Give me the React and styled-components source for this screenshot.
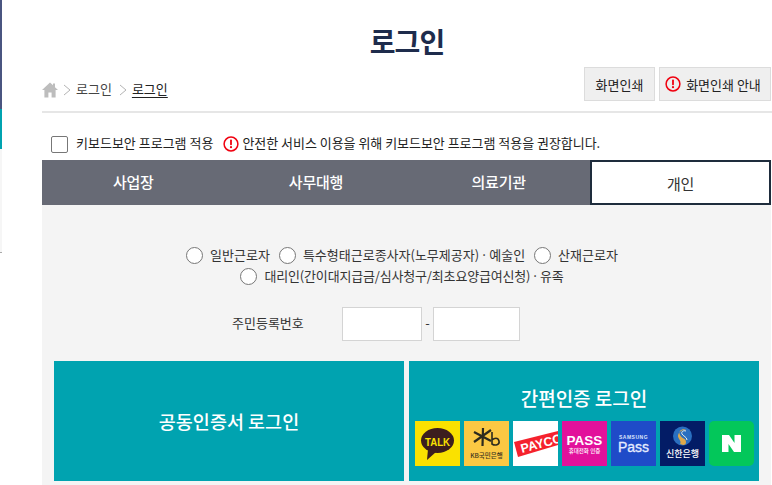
import { createGlobalStyle, styled } from "styled-components";

const GlobalStyle = createGlobalStyle`
  html, body {
    margin: 0;
    padding: 0;
    background: #fff;
  }
  body {
    font-family: "Noto Sans CJK KR", "Noto Sans", sans-serif;
    color: #222;
    overflow: hidden;
  }
`;

const Page = styled.div`
  display: flex;
  width: 772px;
  height: 485px;
  overflow: hidden;
`;
const Rail = styled.div`
  flex: 0 0 42px;
  display: flex;
  flex-direction: column;
`;
const RailBar = styled.div`
  width: 2px;
  height: ${(p) => p.$h}px;
  background: ${(p) => p.$color};
`;
const RailLine = styled.div`
  width: 2px;
  height: 1px;
  background: #aaa;
`;
const Main = styled.main`
  flex: 1;
  min-width: 0;
  display: flex;
  flex-direction: column;
  & > * {
    flex-shrink: 0;
  }
`;
const Title = styled.h1`
  margin: 0;
  padding-top: 22px;
  height: 66px;
  box-sizing: border-box;
  font-size: 28px;
  line-height: 38px;
  font-weight: 700;
  letter-spacing: -0.9px;
  text-align: center;
  color: #1e2c4c;
`;
const TopRow = styled.div`
  display: flex;
  justify-content: space-between;
  align-items: flex-start;
  height: 45px;
  padding-right: 1px;
  border-bottom: 2px solid #e6e6e6;
`;
const Crumbs = styled.nav`
  display: flex;
  align-items: center;
  height: 34px;
  padding-top: 13px;
  box-sizing: border-box;
  font-size: 13px;
  color: #444;
`;
const CrumbLink = styled.span`
  margin-right: ${(p) => (p.$current ? "0" : "2px")};
  padding-bottom: 2px;
  color: ${(p) => (p.$current ? "#222" : "#444")};
  text-decoration: ${(p) => (p.$current ? "underline" : "none")};
  text-underline-offset: 3px;
`;
const CrumbSep = styled.span`
  display: flex;
  margin: 0 5px;
`;
const Buttons = styled.div`
  display: flex;
  gap: 4px;
  padding-top: 1px;
`;
const PrintButton = styled.button`
  display: flex;
  align-items: center;
  justify-content: center;
  gap: 5px;
  width: ${(p) => p.$w}px;
  height: 34px;
  padding: 0 ${(p) => (p.$icon ? "4px" : "0")} 0 0;
  background: #efefef;
  border: 1px solid #dcdcdc;
  font: inherit;
  font-size: 13px;
  color: #222;
`;
const SecurityRow = styled.div`
  display: flex;
  align-items: center;
  height: 47px;
  padding: 15px 0 0 9px;
  box-sizing: border-box;
  font-size: 13px;
  color: #222;
`;
const Check = styled.span`
  width: 15px;
  height: 15px;
  border: 1px solid #777;
  border-radius: 2px;
  background: #fff;
  margin-right: 8px;
`;
const SecurityText = styled.span`
  padding-bottom: 3px;
  letter-spacing: ${(p) => (p.$note ? "-0.03px" : "0")};
`;
const SecurityNote = styled.span`
  display: flex;
  align-items: center;
  gap: 3px;
  margin-left: 10px;
`;
const Tabs = styled.div`
  display: grid;
  grid-template-columns: repeat(3, 1fr) 181px;
  height: 45px;
  margin-right: 1px;
  background: #676a75;
`;
const Tab = styled.div`
  display: flex;
  align-items: center;
  justify-content: center;
  font-size: 15px;
  font-weight: ${(p) => (p.$active ? 400 : 500)};
  letter-spacing: -0.2px;
  color: ${(p) => (p.$active ? "#333" : "#fff")};
  background: ${(p) => (p.$active ? "#fff" : "transparent")};
  border: ${(p) => (p.$active ? "2px solid #1e2c3c" : "none")};
  box-sizing: border-box;
  padding-top: ${(p) => (p.$active ? "2px" : "0")};
  padding-bottom: ${(p) => (p.$active ? "0" : "2px")};
`;
const Panel = styled.section`
  flex: 1;
  margin-right: 1px;
  padding: 40px 12px 4px;
  background: #f4f4f4;
  display: flex;
  flex-direction: column;
`;
const Radios = styled.div`
  display: flex;
  flex-wrap: wrap;
  justify-content: center;
  column-gap: 9px;
  padding-right: 9px;
  font-size: 13px;
  line-height: 21px;
  word-spacing: -1.5px;
  color: #333;
`;
const RadioItem = styled.label`
  display: flex;
  align-items: center;
  gap: 7px;
  letter-spacing: ${(p) => (p.$tight ? "-0.17px" : "0")};
`;
const RadioDot = styled.span`
  width: 15px;
  height: 15px;
  border: 1px solid #777;
  border-radius: 50%;
  background: #fff;
`;
const RadioText = styled.span`
  line-height: 19px;
  padding-bottom: 2px;
`;
const IdRow = styled.div`
  display: flex;
  align-items: center;
  height: 34px;
  margin: 20px 0;
  padding-left: 178px;
  font-size: 13px;
  color: #333;
`;
const IdLabel = styled.label`
  width: 110px;
  padding-bottom: 4px;
`;
const IdInput = styled.input`
  width: ${(p) => p.$w}px;
  height: 34px;
  box-sizing: border-box;
  padding: 0;
  border: 1px solid #d4d4d4;
  background: #fff;
`;
const Dash = styled.span`
  width: 11px;
  padding-bottom: 4px;
  text-align: center;
`;
const LoginRow = styled.div`
  display: flex;
  gap: 5px;
  height: 120px;
`;
const LoginCard = styled.div`
  flex: 0 0 350px;
  display: flex;
  flex-direction: column;
  align-items: center;
  justify-content: center;
  background: #00a3b0;
  color: #fff;
  font-size: 18.5px;
  font-weight: 500;
`;
const SimpleCard = styled(LoginCard)`
  justify-content: flex-start;
  padding-top: 24px;
`;
const SimpleTitle = styled.div`
  margin-bottom: 10px;
  font-size: 19px;
  line-height: 26px;
`;
const LogoRow = styled.div`
  display: flex;
  gap: 4px;
`;
const LogoBox = styled.div`
  width: 45px;
  height: 45px;
  overflow: hidden;
  background: ${(p) => p.$bg};
  border-radius: ${(p) => (p.$round ? "5px" : "0")};
`;
const LogoSvg = styled.svg`
  display: block;
  width: 45px;
  height: 45px;
  font-family: "Liberation Sans", "Noto Sans CJK KR", sans-serif;
`;
const KrText = styled.text`
  font-family: "Noto Sans CJK KR", sans-serif;
`;

const Alert = () => (
  <svg width="16" height="16" viewBox="0 0 16 16" style={{ flex: "none" }}>
    <circle cx="8" cy="8" r="6.9" fill="none" stroke="#f0000f" strokeWidth="1.5" />
    <rect x="7.1" y="3.6" width="1.8" height="5.6" rx="0.7" fill="#f0000f" />
    <circle cx="8" cy="11.2" r="1.1" fill="#f0000f" />
  </svg>
);

const Chevron = () => (
  <svg width="8" height="12" viewBox="0 0 8 12">
    <path d="M1 1l6 5-6 5" fill="none" stroke="#b4b4b4" strokeWidth="1" />
  </svg>
);

const Home = () => (
  <svg width="16" height="16" viewBox="0 0 16 16">
    <path d="M8 0.5L0 8h2.4v7.5h4V10.5h3.2v5h4V8H16L13 5.2V1.5h-2v1.8z" fill="#bdbdbd" />
  </svg>
);

const TalkLogo = () => (
  <LogoSvg viewBox="0 0 45 45">
    <ellipse cx="22.5" cy="19.5" rx="16.5" ry="12.5" fill="#3c1e1e" />
    <path d="M13 28l-1 11 9-8z" fill="#3c1e1e" />
    <text x="22.5" y="25" textAnchor="middle" fontSize="11" fontWeight="700" fill="#fae100" textLength="25" lengthAdjust="spacingAndGlyphs">TALK</text>
  </LogoSvg>
);

const KbLogo = () => (
  <LogoSvg viewBox="0 0 45 45">
    <path d="M19 7l-0.5 18M10 11l17 9M27 9L10 21" stroke="#2c2a1e" strokeWidth="2.2" fill="none" />
    <path d="M28 11v12c3 2 8 1 7-3s-5-3-7-1" stroke="#2c2a1e" strokeWidth="1.6" fill="none" />
    <KrText x="22.5" y="37" textAnchor="middle" fontSize="6.5" fill="#3a3420">KB국민은행</KrText>
  </LogoSvg>
);

const PaycoLogo = () => (
  <LogoSvg viewBox="0 0 45 45">
    <path d="M1 21L45 10v14L5 36z" fill="#f5222d" />
    <text x="9" y="32" fontSize="12.5" fontWeight="700" fill="#fff" transform="rotate(-15 9 32)">PAYCO</text>
  </LogoSvg>
);

const PassLogo = () => (
  <LogoSvg viewBox="0 0 45 45">
    <text x="22.5" y="23.5" textAnchor="middle" fontSize="13.5" fontWeight="700" fill="#fff">PASS</text>
    <KrText x="22.5" y="32" textAnchor="middle" fontSize="5.5" fill="#fff">휴대전화 인증</KrText>
  </LogoSvg>
);

const SamsungLogo = () => (
  <LogoSvg viewBox="0 0 45 45">
    <text x="22.5" y="17.5" textAnchor="middle" fontSize="5" fontWeight="700" letterSpacing="0.5" fill="#dbe3fb">SAMSUNG</text>
    <text x="22.5" y="31" textAnchor="middle" fontSize="14" stroke="#e6ecff" strokeWidth="0.3" fill="#e6ecff">Pass</text>
  </LogoSvg>
);

const ShinhanLogo = () => (
  <LogoSvg viewBox="0 0 45 45">
    <circle cx="22.5" cy="15" r="9.5" fill="#2a6fc0" />
    <path d="M27 9c-5-2-9 1-7 5s6 3 6 7-4 3-6 2c2-3-2-5-2-8s4-7 9-6z" fill="#e0a94a" />
    <path d="M26 10c-3-1-5 1-4 3s5 3 5 6" fill="none" stroke="#f4f1e4" strokeWidth="1" />
    <KrText x="22.5" y="36" textAnchor="middle" fontSize="9" fill="#fff">신한은행</KrText>
  </LogoSvg>
);

const NaverLogo = () => (
  <LogoSvg viewBox="0 0 45 45">
    <path d="M13 14h7l5.5 8v-8H32v17h-7l-5.5-8v8H13z" fill="#fff" />
  </LogoSvg>
);

const logos = [
  { bg: "#fae100", Mark: TalkLogo },
  { bg: "#fbc843", Mark: KbLogo },
  { bg: "#fff", Mark: PaycoLogo },
  { bg: "#e2119b", Mark: PassLogo },
  { bg: "#1f4bc8", Mark: SamsungLogo },
  { bg: "#031c66", Mark: ShinhanLogo },
  { bg: "#03c75a", Mark: NaverLogo, round: true },
];

export default function App() {
  return (
    <Page>
      <GlobalStyle />
      <Rail>
        <RailBar $h={109} $color="#4a5580" />
        <RailBar $h={40} $color="#00a3b0" />
        <RailBar $h={103} $color="#f6f6f6" />
        <RailLine />
      </Rail>
      <Main>
        <Title>로그인</Title>
        <TopRow>
          <Crumbs>
            <Home />
            <CrumbSep><Chevron /></CrumbSep>
            <CrumbLink>로그인</CrumbLink>
            <CrumbSep><Chevron /></CrumbSep>
            <CrumbLink $current>로그인</CrumbLink>
          </Crumbs>
          <Buttons>
            <PrintButton $w={71}>화면인쇄</PrintButton>
            <PrintButton $w={112} $icon><Alert />화면인쇄 안내</PrintButton>
          </Buttons>
        </TopRow>
        <SecurityRow>
          <Check />
          <SecurityText>키보드보안 프로그램 적용</SecurityText>
          <SecurityNote>
            <Alert />
            <SecurityText $note>안전한 서비스 이용을 위해 키보드보안 프로그램 적용을 권장합니다.</SecurityText>
          </SecurityNote>
        </SecurityRow>
        <Tabs>
          <Tab>사업장</Tab>
          <Tab>사무대행</Tab>
          <Tab>의료기관</Tab>
          <Tab $active>개인</Tab>
        </Tabs>
        <Panel>
          <Radios>
            <RadioItem><RadioDot /><RadioText>일반근로자</RadioText></RadioItem>
            <RadioItem><RadioDot /><RadioText>특수형태근로종사자(노무제공자) · 예술인</RadioText></RadioItem>
            <RadioItem><RadioDot /><RadioText>산재근로자</RadioText></RadioItem>
            <RadioItem $tight><RadioDot /><RadioText>대리인(간이대지급금/심사청구/최초요양급여신청) · 유족</RadioText></RadioItem>
          </Radios>
          <IdRow>
            <IdLabel>주민등록번호</IdLabel>
            <IdInput $w={80} />
            <Dash>-</Dash>
            <IdInput $w={87} />
          </IdRow>
          <LoginRow>
            <LoginCard>공동인증서 로그인</LoginCard>
            <SimpleCard>
              <SimpleTitle>간편인증 로그인</SimpleTitle>
              <LogoRow>
                {logos.map(({ bg, Mark, round }) => (
                  <LogoBox key={bg} $bg={bg} $round={round}><Mark /></LogoBox>
                ))}
              </LogoRow>
            </SimpleCard>
          </LoginRow>
        </Panel>
      </Main>
    </Page>
  );
}
